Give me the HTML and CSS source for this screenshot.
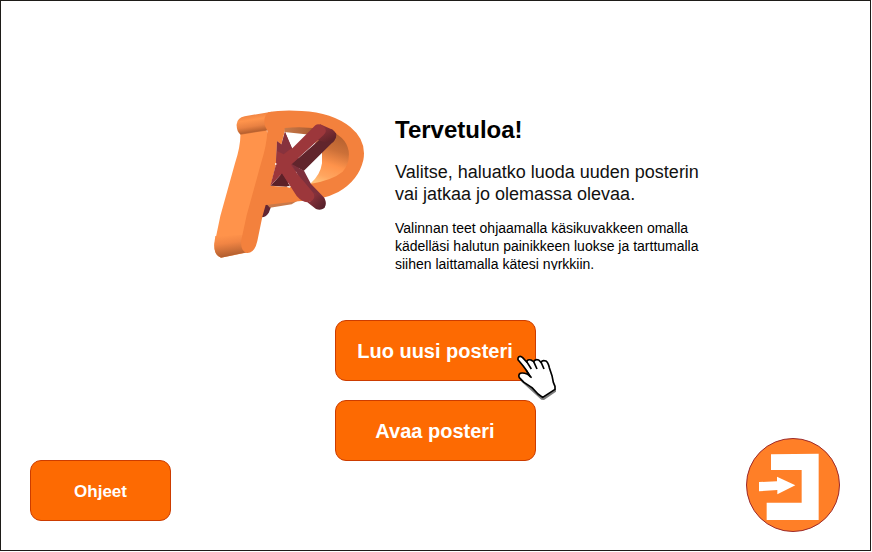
FILE: index.html
```html
<!DOCTYPE html>
<html lang="fi">
<head>
<meta charset="utf-8">
<meta name="viewport" content="width=device-width, initial-scale=1">
<title>Tervetuloa!</title>
<link rel="stylesheet" href="styles.css">
</head>
<body>
<main class="screen">
  <section class="intro">
    <svg class="logo" viewBox="0 0 510 510" role="img" aria-label="PK">
      <defs>
        <linearGradient id="serif" x1="140" y1="40" x2="150" y2="104" gradientUnits="userSpaceOnUse">
          <stop offset="0" stop-color="#ed8040"/><stop offset=".3" stop-color="#ff944c"/><stop offset=".6" stop-color="#e98142"/><stop offset=".85" stop-color="#b9612f"/><stop offset="1" stop-color="#f58a46"/>
        </linearGradient>
        <linearGradient id="foot" x1="70" y1="405" x2="79" y2="472" gradientUnits="userSpaceOnUse">
          <stop offset="0" stop-color="#ff934b"/><stop offset=".35" stop-color="#f18544"/><stop offset="1" stop-color="#aa5a2d"/>
        </linearGradient>
        <linearGradient id="bowl" x1="400" y1="105" x2="350" y2="250" gradientUnits="userSpaceOnUse">
          <stop offset="0" stop-color="#b5602f"/><stop offset=".3" stop-color="#cc7038"/><stop offset=".6" stop-color="#ff934b"/><stop offset=".85" stop-color="#ffa660"/><stop offset="1" stop-color="#ffc078"/>
        </linearGradient>
        <linearGradient id="bowltop" x1="240" y1="85" x2="330" y2="100" gradientUnits="userSpaceOnUse">
          <stop offset="0" stop-color="#c77a4a"/><stop offset="1" stop-color="#a95a30"/>
        </linearGradient>
        <linearGradient id="tip" x1="360" y1="80" x2="385" y2="125" gradientUnits="userSpaceOnUse">
          <stop offset="0" stop-color="#8d333a"/><stop offset="1" stop-color="#5b2127"/>
        </linearGradient>
        <linearGradient id="leg" x1="315" y1="300" x2="350" y2="330" gradientUnits="userSpaceOnUse">
          <stop offset="0" stop-color="#87313a"/><stop offset="1" stop-color="#55202a"/>
        </linearGradient>
      </defs>
      <path fill="#622633" d="M172 310L200 315L192 337Q184 353 168 352Z"/>
      <path fill="#c9794a" d="M182 310L285 298L260 313L195 323Z"/>
      <path fill="url(#bowltop)" d="M236 78Q300 70 342 84L330 106L238 96Z"/>
      <path fill="url(#bowl)" d="M365 84Q450 105 448 165Q440 235 330 264L315 252Q346 226 351 190V158L330 130Z"/>
      <path fill="#ff934b" d="M105 98L183 88L196 120L130 457L48 473Q28 467 28 434L46 348L90 190Q108 134 106 98Z"/>
      <path fill="url(#foot)" d="M31 408L125 404L126 457L48 473Q26 466 28 430Z"/>
      <path fill="url(#serif)" d="M119 49L200 35L200 84L184 92L107 104Q94 95 95 73Q97 53 119 49Z"/>
      <path fill="#f3813d" fill-rule="evenodd" d="M190 37Q230 29 290 33Q382 38 436 81Q486 122 475 180Q461 241 400 276Q355 300 280 304L182 315L172 350L157 423Q149 460 126 459Q105 453 109 420L125 346L168 190Q186 132 187 92Q175 76 179 55Q182 43 190 37ZM239 84L238 98L229 134L216 124L214 190L197 257Q267 264 315 252Q383 240 413 215Q435 192 431 153Q422 106 365 90Q300 77 239 84Z"/>
      <path fill="#87323d" d="M240 95L262 146L290 190L240 260L213 190L216 124L229 134Z"/>
      <path fill="#5c2128" d="M197 257L231 220L256 260Z"/>
      <path fill="#61252c" d="M260 192L380 88L394 101Q393 121 380 130L296 213Z"/>
      <path fill="url(#tip)" d="M344 72L383 89Q398 101 392 115L365 128L338 120Z"/>
      <path fill="#7e303c" d="M263 194L297 212L318 252L350 285Q368 300 359 323L320 310Z"/>
      <path fill="url(#leg)" d="M307 307Q335 299 326 277L355 292Q368 310 357 325Q347 332 333 327Z"/>
      <path fill="#9c373b" d="M216 150L262 145L331 76Q342 67 358 82Q369 94 355 106L258 194L278 223L325 278Q336 300 307 307Q290 305 275 288L231 220L196 258L213 193Z"/>
      <path fill="#87323d" d="M240 96L260 144L236 163L216 153V124L230 134Z"/>
      <path fill="#fff" d="M210 189L217 192L210 195ZM247 258L257 259L255 263L247 262Z"/>
    </svg>
    <div class="copy">
      <h1 class="title">Tervetuloa!</h1>
      <p class="lead">Valitse, haluatko luoda uuden posterin vai jatkaa jo olemassa olevaa.</p>
      <p class="hint">Valinnan teet ohjaamalla käsikuvakkeen omalla kädelläsi halutun painikkeen luokse ja tarttumalla siihen laittamalla kätesi nyrkkiin.</p>
    </div>
  </section>
  <div class="controls">
    <button class="button help" type="button">Ohjeet</button>
    <div class="actions">
      <div class="pointed">
        <button class="button primary" type="button">Luo uusi posteri</button>
        <svg class="hand" viewBox="0 0 126 138" aria-hidden="true">
          <path fill="#444" opacity=".7" d="M12 66L14 78L76 134L84 135L120 110V100L78 126Z"/>
          <path fill="#fff" stroke="#000" stroke-width="5" stroke-linejoin="round" d="M9 5Q14 2 20 8L32 21Q34 12 45 15L53 20Q57 11 68 15L75 22Q79 14 90 18Q96 21 100 38L108 62L112 82L117 94V103L80 127L66 117L48 98L24 82L10 68Q6 59 13 55Q20 52 35 58L42 63L31 46L21 32L6 14Q5 8 9 5Z"/>
          <path fill="none" stroke="#000" stroke-width="5" d="M32 20L46 42M53 20L63 42M75 21L84 42M31 46L42 64L47 68"/>
        </svg>
      </div>
      <button class="button primary" type="button">Avaa posteri</button>
    </div>
    <button class="exit" type="button" aria-label="Poistu">
      <svg class="exit-icon" viewBox="0 0 282 282" aria-hidden="true">
        <circle cx="141" cy="141" r="139.500" fill="#ff7f27" stroke="#9c2a2c" stroke-width="3"/>
        <path fill="#fff" d="M75 49L218 47V246H62V194H167V96H75ZM39 132L93 130V116L148 142L94 169V156L39 160Z"/>
      </svg>
    </button>
  </div>
</main>
</body>
</html>
```
FILE: styles.css
```css
* {
  box-sizing: border-box;
}

body {
  margin: 0;
  padding: 0 1px 1px 0;
  min-height: 100vh;
  display: flex;
  background: #fff;
  color: #000;
  font-family: "Liberation Sans", Arial, sans-serif;
}

.screen {
  flex: 1;
  display: flex;
  flex-direction: column;
  justify-content: space-between;
  gap: 48px;
  padding: 99px 30px 18px 29px;
  border: 1px solid #1e1c18;
}

.intro {
  display: flex;
  justify-content: center;
  gap: 20px;
  padding-left: 46px;
}

.logo {
  flex: none;
  width: 170px;
  height: 170px;
}

.copy {
  width: 316px;
  padding-top: 16px;
}

.title {
  margin: 0 0 17px;
  font-size: 24px;
  line-height: 28px;
}

.lead {
  margin: 0 0 14px;
  color: #111;
  font-size: 18px;
  line-height: 22px;
}

.hint {
  margin: 0;
  max-height: 51px;
  overflow: hidden;
  font-size: 14px;
  line-height: 18px;
}

.controls {
  display: grid;
  grid-template-columns: 1fr auto 1fr;
  align-items: end;
}

.button {
  height: 61px;
  padding: 2px 0 0;
  border: 1px solid #cc3c00;
  border-radius: 11px;
  background: #fd6a02;
  color: #fff;
  font-family: inherit;
  font-weight: bold;
  cursor: pointer;
}

.help {
  width: 141px;
  margin-bottom: 11px;
  font-size: 17px;
}

.actions {
  align-self: start;
  display: grid;
  gap: 19px;
}

.primary {
  width: 201px;
  font-size: 20px;
}

.pointed {
  position: relative;
  display: grid;
}

.hand {
  position: absolute;
  top: 35px;
  left: 181px;
  width: 42px;
  height: 46px;
  pointer-events: none;
}

.exit {
  justify-self: end;
  width: 94px;
  height: 94px;
  margin-top: 118px;
  padding: 0;
  border: 0;
  border-radius: 50%;
  background: none;
  cursor: pointer;
}

.exit-icon {
  display: block;
  width: 100%;
  height: 100%;
}
```
